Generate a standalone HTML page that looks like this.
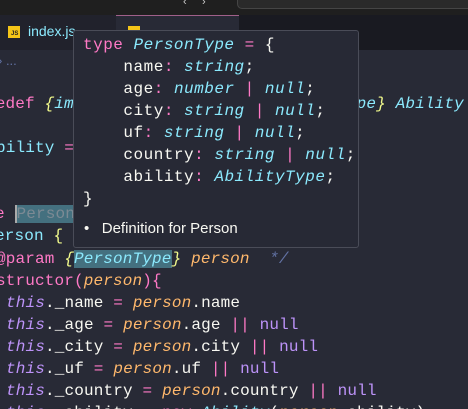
<!DOCTYPE html>
<html style="overflow:hidden;height:409px"><head><style>
*{margin:0;padding:0;box-sizing:border-box}
body{width:468px;height:409px;overflow:hidden;background:#282a36;position:relative;font-family:"Liberation Mono",monospace;font-size:16px;color:#f8f8f2}
.ab{position:absolute;white-space:pre}
.l{position:absolute;left:0;height:22px;line-height:22px;white-space:pre;letter-spacing:0.15px}
.k{color:#ff79c6}.c{color:#8be9fd;font-style:italic}.o{color:#ffb86c;font-style:italic}.p{color:#bd93f9}.y{color:#f1fa8c}.g{color:#6272a4;font-style:italic}.i{font-style:italic}.pu{color:#bd93f9;font-style:italic}
</style></head><body>
<div class="ab" style="left:0;top:0;width:468px;height:15px;background:#1f1f1f"></div>
<div class="ab" style="left:237px;top:-6px;width:240px;height:15px;border:1px solid #454545;border-radius:5px;background:#2a2a2a"></div>
<div class="ab" style="left:183px;top:-4px;color:#ccc;font-size:11px;font-family:'Liberation Sans'">‹ &nbsp;&nbsp;&nbsp;&nbsp;›</div>
<div class="ab" style="left:0;top:15px;width:468px;height:35px;background:#191a21"></div>
<div class="ab" style="left:0;top:15px;width:116px;height:35px;background:#21222c"></div>
<div class="ab" style="left:116px;top:15px;width:123px;height:35px;background:#282a36;border-top:1px solid #a0608a"></div>
<div class="ab" style="left:8px;top:26px;width:12px;height:12px;background:#f5c518;color:#222;font:bold 6px 'Liberation Sans';padding:5px 0 0 3px">JS</div>
<div class="ab" style="left:28px;top:23px;color:#8be9fd;font:14px 'Liberation Sans'">index.js</div>
<div class="ab" style="left:128px;top:26px;width:12px;height:12px;background:#f5c518"></div>
<div class="ab" style="left:-2px;top:53px;color:#6272a4;font:13px 'Liberation Sans'">› ...</div>

<div class="l" style="top:93px;left:-14px"><span class="k">pedef</span> <span class="y i">{</span><span class="c">impo                   PersonType</span><span class="y i">}</span> <span class="c">Ability</span></div>
<div class="l" style="top:137px;left:-4px"><span style="color:#8be9fd">bility</span> <span class="k">=</span></div>
<div class="l" style="top:203px;left:-5px"><span class="k">e</span> <span style="background:#44707f;color:#7c8a94;border-left:2px solid #aaa">Person</span></div>
<div class="l" style="top:225px;left:-5px"><span style="color:#8be9fd">erson</span> <span class="y">{</span></div>
<div class="l" style="top:248px;left:-4px"><span class="k">@param</span> <span class="y i">{</span><span class="c" style="background:#44707f">PersonType</span><span class="y i">}</span> <span class="o">person</span>  <span class="g">*/</span></div>
<div class="l" style="top:270px;left:-4px"><span class="k">structor</span><span class="k">(</span><span class="o">person</span><span class="k">){</span></div>
<div class="l" style="top:292px;left:6px"><span class="pu">this</span>._name <span class="k">=</span> <span class="o">person</span>.name</div>
<div class="l" style="top:314px;left:6px"><span class="pu">this</span>._age <span class="k">=</span> <span class="o">person</span>.age <span class="k">||</span> <span class="p">null</span></div>
<div class="l" style="top:336px;left:6px"><span class="pu">this</span>._city <span class="k">=</span> <span class="o">person</span>.city <span class="k">||</span> <span class="p">null</span></div>
<div class="l" style="top:358px;left:6px"><span class="pu">this</span>._uf <span class="k">=</span> <span class="o">person</span>.uf <span class="k">||</span> <span class="p">null</span></div>
<div class="l" style="top:380px;left:6px"><span class="pu">this</span>._country <span class="k">=</span> <span class="o">person</span>.country <span class="k">||</span> <span class="p">null</span></div>
<div class="l" style="top:402px;left:6px"><span class="pu">this</span>._ability <span class="k">=</span> <span class="k">new</span> <span class="c">Ability</span>(<span class="o">person</span>.ability)</div>

<div class="ab" style="left:73px;top:30px;width:286px;height:218px;background:#272935;border:1px solid #4a4c58;border-radius:3px"></div>
<div class="l" style="top:34px;left:83px;letter-spacing:0.5px"><span class="k">type</span> <span class="c">PersonType</span> <span class="k">=</span> {</div>
<div class="l" style="top:56px;left:83px;letter-spacing:0.5px">    name<span class="k">:</span> <span class="c">string</span>;</div>
<div class="l" style="top:78px;left:83px;letter-spacing:0.5px">    age<span class="k">:</span> <span class="c">number</span> <span class="k">|</span> <span class="c">null</span>;</div>
<div class="l" style="top:100px;left:83px;letter-spacing:0.5px">    city<span class="k">:</span> <span class="c">string</span> <span class="k">|</span> <span class="c">null</span>;</div>
<div class="l" style="top:122px;left:83px;letter-spacing:0.5px">    uf<span class="k">:</span> <span class="c">string</span> <span class="k">|</span> <span class="c">null</span>;</div>
<div class="l" style="top:144px;left:83px;letter-spacing:0.5px">    country<span class="k">:</span> <span class="c">string</span> <span class="k">|</span> <span class="c">null</span>;</div>
<div class="l" style="top:166px;left:83px;letter-spacing:0.5px">    ability<span class="k">:</span> <span class="c">AbilityType</span>;</div>
<div class="l" style="top:188px;left:83px">}</div>
<div class="ab" style="left:84px;top:220px;font:15px 'Liberation Sans';color:#f8f8f2">•&nbsp;&nbsp;&nbsp;Definition for Person</div>
</body></html>
